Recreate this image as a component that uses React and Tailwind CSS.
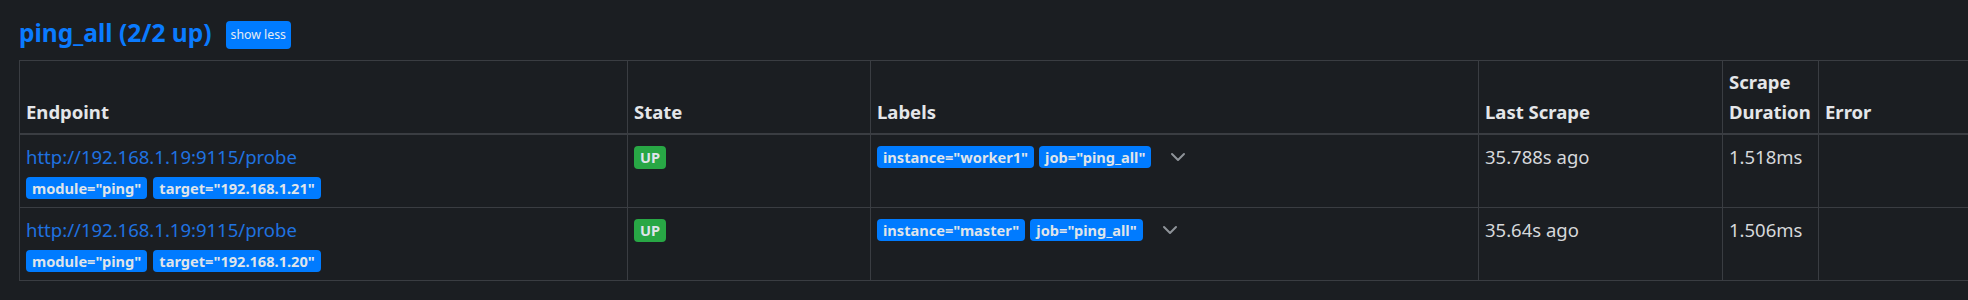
import React from "react";

const cols = "grid grid-cols-[608px_243px_608px_244px_96px_400px]";

function Badge({ children, color = "bg-[#007bff]" }) {
  return (
    <span
      className={`${color} inline-flex h-[22px] items-center rounded-[4px] px-[6px] text-[14.6px] font-bold leading-none text-[#dfe4ea] whitespace-nowrap`}
    >
      {children}
    </span>
  );
}

function Chevron() {
  return (
    <svg width="16" height="10" viewBox="0 0 16 10" className="ml-[14px]">
      <polyline
        points="2,2 8,8 14,2"
        fill="none"
        stroke="#8e9399"
        strokeWidth="2"
        strokeLinecap="round"
        strokeLinejoin="round"
      />
    </svg>
  );
}

const rows = [
  {
    target: "192.168.1.21",
    instance: "worker1",
    last: "35.788s ago",
    dur: "1.518ms",
  },
  {
    target: "192.168.1.20",
    instance: "master",
    last: "35.64s ago",
    dur: "1.506ms",
  },
];

export default function App() {
  const th =
    "flex flex-col justify-end border-r border-b-2 border-[#3a3d42] px-[6px] pt-[6px] pb-[6px] font-bold text-[#e4e6e9] leading-[30px]";
  const td =
    "border-r border-b border-[#3a3d42] px-[6px] pt-[7px] pb-[8px] leading-[30px] text-[#d6d8db]";
  return (
    <div
      className="min-h-[300px] w-full overflow-hidden bg-[#1b1e22] pl-[19px] text-[18.5px]"
      style={{ fontFamily: '"Noto Sans", sans-serif' }}
    >
      <div className="flex h-[60px] items-center pt-[10px]">
        <h2 className="mb-[4px] text-[24.5px] font-bold leading-[30px] text-[#0a7bff]">
          ping_all (2/2 up)
        </h2>
        <button className="ml-[14px] h-[28px] rounded-[4px] bg-[#007bff] px-[5px] text-[12.3px] leading-none text-[#e6ebf2]">
          show less
        </button>
      </div>
      <div className="w-[2199px] border-l border-t border-[#3a3d42]">
        <div className={cols}>
          <div className={th}>Endpoint</div>
          <div className={th}>State</div>
          <div className={th}>Labels</div>
          <div className={th}>Last Scrape</div>
          <div className={th}>
            <span>Scrape</span>
            <span>Duration</span>
          </div>
          <div className={th}>Error</div>
        </div>
        {rows.map((r, i) => (
          <div className={cols} key={i}>
            <div className={td}>
              <div className="h-[30px] text-[#1f72e0]">http://192.168.1.19:9115/probe</div>
              <div className="mt-[5px] flex gap-[6px]">
                <Badge>module="ping"</Badge>
                <Badge>target="{r.target}"</Badge>
              </div>
            </div>
            <div className={td}>
              <div className="flex h-[30px] items-center">
                <span className="inline-flex h-[23px] items-center rounded-[4px] bg-[#28a745] px-[6px] text-[14.6px] font-bold leading-none text-[#dfe4ea]">
                  UP
                </span>
              </div>
            </div>
            <div className={td}>
              <div className="flex h-[30px] items-center gap-[5px]">
                <Badge>instance="{r.instance}"</Badge>
                <Badge>job="ping_all"</Badge>
                <Chevron />
              </div>
            </div>
            <div className={td}>{r.last}</div>
            <div className={td}>{r.dur}</div>
            <div className={td}></div>
          </div>
        ))}
      </div>
    </div>
  );
}
